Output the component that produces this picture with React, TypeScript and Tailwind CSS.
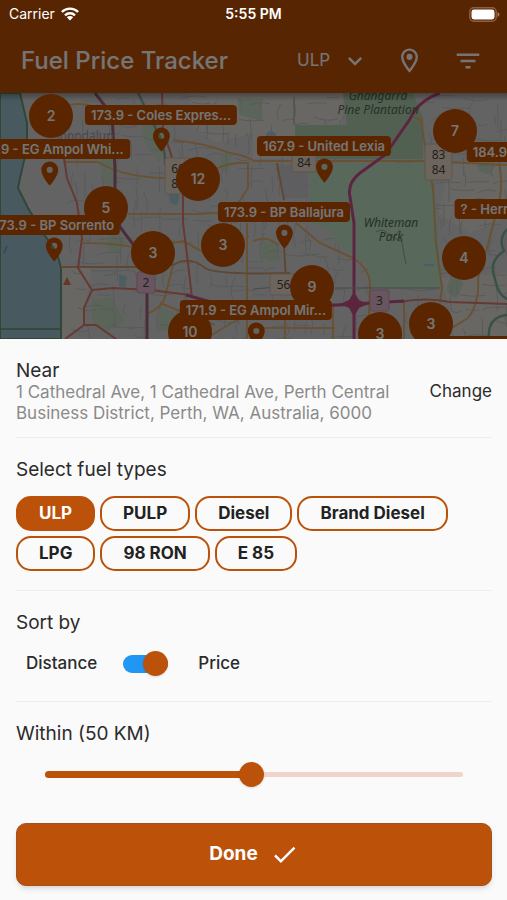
import { useState } from "react";
import { MdCheck, MdExpandMore, MdFilterList, MdLocationOn, MdOutlineLocationOn } from "react-icons/md";

const FUEL_TYPES = ["ULP", "PULP", "Diesel", "Brand Diesel", "LPG", "98 RON", "E 85"];

const CLUSTERS = [
    { x: 51, y: 23, count: 2 },
    { x: 198, y: 86, count: 12 },
    { x: 106, y: 115, count: 5 },
    { x: 153, y: 160, count: 3 },
    { x: 223, y: 152, count: 3 },
    { x: 312, y: 194, count: 9 },
    { x: 455, y: 38, count: 7 },
    { x: 464, y: 165, count: 4 },
    { x: 190, y: 239, count: 10 },
    { x: 380, y: 241, count: 3 },
    { x: 431, y: 231, count: 3 },
];

// x is the centre of the pin, y the top of its label
const STATIONS = [
    { x: 161, y: 12, label: "173.9 - Coles Expres..." },
    { x: 50, y: 46, label: "173.9 - EG Ampol Whi..." },
    { x: 324, y: 43, label: "167.9 - United Lexia" },
    { x: 54, y: 122, label: "173.9 - BP Sorrento" },
    { x: 284, y: 109, label: "173.9 - BP Ballajura" },
    { x: 541, y: 49, label: "184.9 - Puma Ellenb..." },
    { x: 529, y: 106, label: "? - Herne Hill Roadh..." },
    { x: 256, y: 207, label: "171.9 - EG Ampol Mir..." },
    { x: 502, y: 243, label: "175.9 - Caversham" },
];

const SHIELDS = [
    { x: 292, y: 59, w: 24, h: 20, lines: ["84"] },
    { x: 425, y: 51, w: 27, h: 36, lines: ["83", "84"] },
    { x: 165, y: 65, w: 26, h: 36, lines: ["60", "81"] },
    { x: 270, y: 181, w: 27, h: 21, lines: ["56"] },
    { x: 137, y: 179, w: 18, h: 21, lines: ["2"], major: true },
    { x: 370, y: 197, w: 19, h: 21, lines: ["3"], major: true },
];

// Residential streets: short wandering lines, the same on every render
function makeStreets() {
    let seed = 11;
    const rand = () => {
        seed = (seed * 16807) % 2147483647;
        return seed / 2147483647;
    };
    let d = "";
    for (let x = 66; x < 507; x += 15) {
        for (let y = 4; y < 246; y += 17) {
            const sx = x + rand() * 12;
            const sy = y + rand() * 12;
            const across = rand() > 0.5;
            const len = 10 + rand() * 18;
            const bend = (rand() - 0.5) * 14;
            d += across
                ? `M${sx} ${sy}q${len / 2} ${bend} ${len} ${bend / 3}`
                : `M${sx} ${sy}q${bend} ${len / 2} ${bend / 3} ${len}`;
        }
    }
    return d;
}

const STREETS = makeStreets();

function MapTiles() {
    return (
        <svg
            viewBox="0 0 507 246"
            preserveAspectRatio="xMidYMid slice"
            className="absolute inset-0 h-full w-full"
            aria-hidden="true"
        >
            <rect width="507" height="246" fill="#d8d8d8" />
            <g fill="#e4e1db">
                <path d="M253 0H343V35H295V66H253ZM190 0H253V40L215 50L190 30ZM61 174H92L84 215V232L65 246H61Z" />
                <path d="M452 70H507V125L470 140L438 120ZM442 185L507 180V246H455Z" />
            </g>
            <g fill="#c5dbbf">
                <path d="M100 62H114V94L103 90ZM138 10L165 35L160 70L145 50ZM92 207L112 204L125 228L104 240L92 228ZM262 148L280 150L276 170L262 165Z" />
                <path d="M112 138L128 150L118 162L106 155ZM237 6H262V28L240 22ZM160 214L176 220L170 240L158 236ZM480 60L498 64L490 82L478 78ZM222 60L232 62L228 78L220 76ZM452 178L464 190L456 206L446 198Z" />
            </g>
            <path d={STREETS} fill="none" stroke="#c3c3c6" strokeWidth="1" />
            <path d="M343 0H413L423 25V66H295V32H347Z" fill="#b4d2b0" />
            <path d="M310 70H433L436 115L442 195H372L368 175L353 160L334 150V140L310 128Z" fill="#bfe2c4" />
            <path d="M308 72V105H285L279 72Z" fill="#cdcdd2" />
            <g fill="#a5ccd8">
                <circle cx="271" cy="43" r="5" />
                <path d="M119 182L127 183L125 195L119 193ZM168 98L179 102L178 112L170 110ZM424 171h10v2h-10Z" />
            </g>
            <path
                d="M0 0H20L27 30V55L20 85L18 95L28 115L43 140L57 160L61 175V246H0Z"
                fill="#9dc4d2"
                stroke="#679c78"
                strokeWidth="2"
            />
            <path d="M0 236H61" stroke="#5b9c72" strokeWidth="1.5" />
            <path d="M4 160l3-7M12 139l4-8" stroke="#7a8fd0" strokeWidth="1.5" />
            <path d="M63 192l4-8 4 8Z" fill="#d87848" />
            <g fill="none" stroke="#7fb49a" strokeWidth="2.5">
                <path d="M138 0Q150 24 158 40T165 72" />
                <path d="M507 136Q498 146 504 158Q488 168 495 186Q498 202 507 206M489 246Q487 224 507 222" />
            </g>
            <g fill="none" stroke="#e3b470" strokeWidth="2">
                <path d="M60 14Q80 8 95 14M173 47Q205 50 230 60Q245 62 254 68H425L507 72" />
                <path d="M63 69H98Q122 84 165 85L213 77Q232 68 248 70V95L235 115M128 121H200Q230 118 253 124" />
                <path d="M83 150Q120 150 140 156L183 148L205 160M148 220Q163 215 166 200L173 172L168 150" />
                <path d="M247 130V246M253 148Q268 142 278 152M296 130L320 150L353 165Q370 176 370 192L368 246" />
                <path d="M420 24Q426 60 433 95L436 150L442 195L440 210M499 70Q504 95 497 117L487 155L478 185Q480 210 468 225L440 242" />
                <path d="M253 235H335M285 225V246M333 210V246M404 208V246M205 246L240 225M160 210L215 232M414 24L423 28" />
            </g>
            <g fill="none" stroke="#cf9c70" strokeWidth="2">
                <path d="M61 174H140L173 172Q190 162 205 175Q215 182 290 180M277 70L284 107M284 154L286 185" />
            </g>
            <g fill="none" stroke="#de7c70" strokeWidth="2">
                <path d="M64 65L67 85L77 110L82 145L78 175L92 197L84 215V232L65 246M84 232H96L116 246" />
                <path d="M92 197L113 195L150 197L190 202M162 0L163 36L172 65L183 100V130L188 170L192 205M400 209Q425 204 450 209L507 211" />
            </g>
            <path d="M95 0L112 22L115 75V110L120 134L147 170V246" fill="none" stroke="#a4627f" strokeWidth="3" />
            <g fill="none" stroke="#c9528a" strokeWidth="3">
                <path d="M440 0Q418 8 410 26L385 62L360 80Q347 90 350 104L354 130V246M186 202L211 209Q240 220 300 214L354 211L404 208" />
            </g>
            <path d="M354 199L359 207L368 211L359 215L354 224L349 215L340 211L349 207Z" fill="#c9528a" />
            <path
                d="M376 139q8-5 14 4l12 6 2 12 2 10M392 145l8-8M253 196l25-2M335 195H440M294 4V32"
                fill="none"
                stroke="#96a596"
                strokeWidth="1"
            />
            {SHIELDS.map((s) => (
                <g key={s.x}>
                    <rect
                        x={s.x}
                        y={s.y}
                        width={s.w}
                        height={s.h}
                        rx="2"
                        fill={s.major ? "#e5b9cf" : "#ecdccb"}
                        stroke={s.major ? "#cf9ab6" : "#cdb9a4"}
                    />
                    {s.lines.map((line, i) => (
                        <text
                            key={line}
                            x={s.x + s.w / 2}
                            y={s.y + 15 + i * 15}
                            textAnchor="middle"
                            fontSize="12"
                            fill="#4d463f"
                            className="font-['Noto_Sans',sans-serif]"
                        >
                            {line}
                        </text>
                    ))}
                </g>
            ))}
            <g textAnchor="middle" fontSize="12" fontStyle="italic" fill="#4f6d54" className="font-['Noto_Sans',sans-serif]">
                <text x="378" y="7">Gnangarra</text>
                <text x="378" y="21">Pine Plantation</text>
                <text x="391" y="134">Whiteman</text>
                <text x="391" y="148">Park</text>
            </g>
            <text x="85" y="47" textAnchor="middle" fontSize="12" fill="#a298aa" className="font-['Noto_Sans',sans-serif]">
                Joondalup
            </text>
        </svg>
    );
}

function WifiIcon() {
    return (
        <svg viewBox="0 0 18 14" className="h-[14px] w-[18px]" aria-hidden="true">
            <g fill="none" stroke="#fff" strokeWidth="2.4">
                <path d="M0.9 5A11.5 11.5 0 0 1 17.1 5" />
                <path d="M4 8.3A7.1 7.1 0 0 1 14 8.3" />
            </g>
            <path d="M9 13.6L5.8 10.3A4.6 4.6 0 0 1 12.2 10.3Z" fill="#fff" />
        </svg>
    );
}

function BatteryIcon() {
    return (
        <svg viewBox="0 0 31 15" className="h-[15px] w-[31px]" aria-hidden="true">
            <rect x="0.8" y="0.8" width="26.4" height="13.4" rx="4" fill="none" stroke="#8f6040" strokeWidth="1.4" />
            <rect x="2.5" y="2.5" width="23" height="10" rx="2.4" fill="#fff" />
            <path d="M28.6 5v5q1.8-0.8 1.8-2.5T28.6 5Z" fill="#a5806a" />
        </svg>
    );
}

export default function App() {
    const [fuel, setFuel] = useState("ULP");
    const [selected, setSelected] = useState(["ULP"]);
    const [byPrice, setByPrice] = useState(true);
    const [distance, setDistance] = useState(50);

    const toggleFuel = (name: string) => {
        setSelected(selected.includes(name) ? selected.filter((f) => f !== name) : [...selected, name]);
    };

    return (
        <div className="min-h-screen flex flex-col bg-[#fafafa] font-['Inter',sans-serif] text-[#2b2b2b]">
            <div className="relative flex flex-1 flex-col overflow-hidden">
                <header className="bg-[#bf5208] text-white">
                    <div className="relative z-20 grid h-7 grid-cols-3 items-center px-[7px] text-sm">
                        <span className="flex items-center gap-[6px] pl-[2px]">
                            Carrier <WifiIcon />
                        </span>
                        <span className="text-center font-semibold">5:55 PM</span>
                        <span className="flex justify-end">
                            <BatteryIcon />
                        </span>
                    </div>
                    <div className="flex h-[65px] items-center pl-[21px] pr-6">
                        <h1 className="flex-1 whitespace-nowrap text-2xl font-medium">Fuel Price Tracker</h1>
                        <div className="grid w-[72px] grid-cols-1 items-center">
                            <select
                                aria-label="Fuel type"
                                value={fuel}
                                onChange={(e) => setFuel(e.target.value)}
                                className="col-start-1 row-start-1 w-full appearance-none bg-transparent text-[17px]"
                            >
                                {FUEL_TYPES.map((name) => (
                                    <option key={name}>{name}</option>
                                ))}
                            </select>
                            <MdExpandMore className="pointer-events-none col-start-1 row-start-1 justify-self-end" size={28} />
                        </div>
                        <button aria-label="Location" className="ml-[26px]">
                            <MdOutlineLocationOn size={29} />
                        </button>
                        <button aria-label="Filters" className="ml-[29px]">
                            <MdFilterList size={30} />
                        </button>
                    </div>
                </header>

                <div className="relative min-h-[246px] flex-1 overflow-hidden">
                    <MapTiles />
                    <div className="absolute inset-x-0 top-0 h-2 bg-linear-to-b from-black/30 to-transparent" />
                    {CLUSTERS.map((c) => (
                        <div
                            key={`${c.x}-${c.y}`}
                            className="absolute flex size-11 -translate-1/2 items-center justify-center rounded-full bg-[#c65200] text-sm font-semibold text-white"
                            style={{ left: c.x, top: c.y }}
                        >
                            {c.count}
                        </div>
                    ))}
                    {STATIONS.map((s) => (
                        <div
                            key={s.label}
                            className="absolute flex -translate-x-1/2 flex-col items-center text-[#c65200]"
                            style={{ left: s.x, top: s.y }}
                        >
                            <span className="whitespace-nowrap rounded bg-[#c65200] px-[6px] text-[13px] leading-5 font-semibold text-white">
                                {s.label}
                            </span>
                            <MdLocationOn size={29} />
                        </div>
                    ))}
                </div>

                <div className="absolute inset-0 z-10 bg-black/54" />
            </div>

            <section className="bg-[#fafafa] pl-4 pr-[15px] pb-[15px]">
                <div className="flex items-center justify-between gap-5 border-b border-[#eeeeee] pt-[21px] pb-[13px]">
                    <div>
                        <h2 className="text-[19px] leading-[22px]">Near</h2>
                        <p className="text-[17px] leading-[21px] text-[#8a8a8a]">
                            1 Cathedral Ave, 1 Cathedral Ave, Perth Central Business District, Perth, WA, Australia, 6000
                        </p>
                    </div>
                    <button className="text-[17px]">Change</button>
                </div>

                <div className="border-b border-[#eeeeee] pt-5 pb-[19px]">
                    <h2 className="text-[19px] leading-6">Select fuel types</h2>
                    <div className="mt-[14px] flex flex-wrap gap-[5px]">
                        {FUEL_TYPES.map((name) => (
                            <button
                                key={name}
                                aria-pressed={selected.includes(name)}
                                onClick={() => toggleFuel(name)}
                                className={`h-[35px] rounded-[15px] border-2 border-[#bc5109] px-[21px] text-[17px] font-bold ${
                                    selected.includes(name) ? "bg-[#bc5109] text-white" : "text-[#222222]"
                                }`}
                            >
                                {name}
                            </button>
                        ))}
                    </div>
                </div>

                <div className="border-b border-[#eeeeee] pt-5 pb-[25px]">
                    <h2 className="text-[19px] leading-6">Sort by</h2>
                    <div className="mt-4 flex h-[25px] items-center pl-[10px] text-[17px] font-medium">
                        <label htmlFor="sort">Distance</label>
                        <input
                            id="sort"
                            type="checkbox"
                            role="switch"
                            checked={byPrice}
                            onChange={(e) => setByPrice(e.target.checked)}
                            className="ml-[26px] mr-[30px] flex h-[18px] w-[45px] appearance-none items-center rounded-full bg-[#bdbdbd] before:size-[25px] before:shrink-0 before:rounded-full before:bg-[#bc5109] before:shadow-sm checked:justify-end checked:bg-[#2196f3]"
                        />
                        <label htmlFor="sort">Price</label>
                    </div>
                </div>

                <div className="pt-5">
                    <label htmlFor="within" className="block text-[19px] leading-6">
                        Within ({distance} KM)
                    </label>
                    <div className="mx-[17px] mt-4 grid items-center">
                        <div className="col-start-1 row-start-1 mx-3 h-[5px] rounded-full bg-[#f0d3c9]" />
                        <div className="col-start-1 row-start-1 mx-3">
                            <div
                                className="h-[7px] rounded-full bg-[#bc5109]"
                                style={{ width: `${((distance - 1) / 99) * 100}%` }}
                            />
                        </div>
                        <input
                            id="within"
                            type="range"
                            min={1}
                            max={100}
                            value={distance}
                            onChange={(e) => setDistance(Number(e.target.value))}
                            className="col-start-1 row-start-1 h-[25px] w-full appearance-none bg-transparent [&::-webkit-slider-thumb]:size-[25px] [&::-webkit-slider-thumb]:appearance-none [&::-webkit-slider-thumb]:rounded-full [&::-webkit-slider-thumb]:bg-[#bc5109] [&::-webkit-slider-thumb]:shadow-sm"
                        />
                    </div>
                </div>

                <button className="mt-9 flex h-[63px] w-full items-center justify-center gap-3 rounded-[10px] border border-[#a3531f] bg-[#bc5109] text-[19px] font-bold text-white shadow-md">
                    Done <MdCheck size={29} />
                </button>
            </section>
        </div>
    );
}
